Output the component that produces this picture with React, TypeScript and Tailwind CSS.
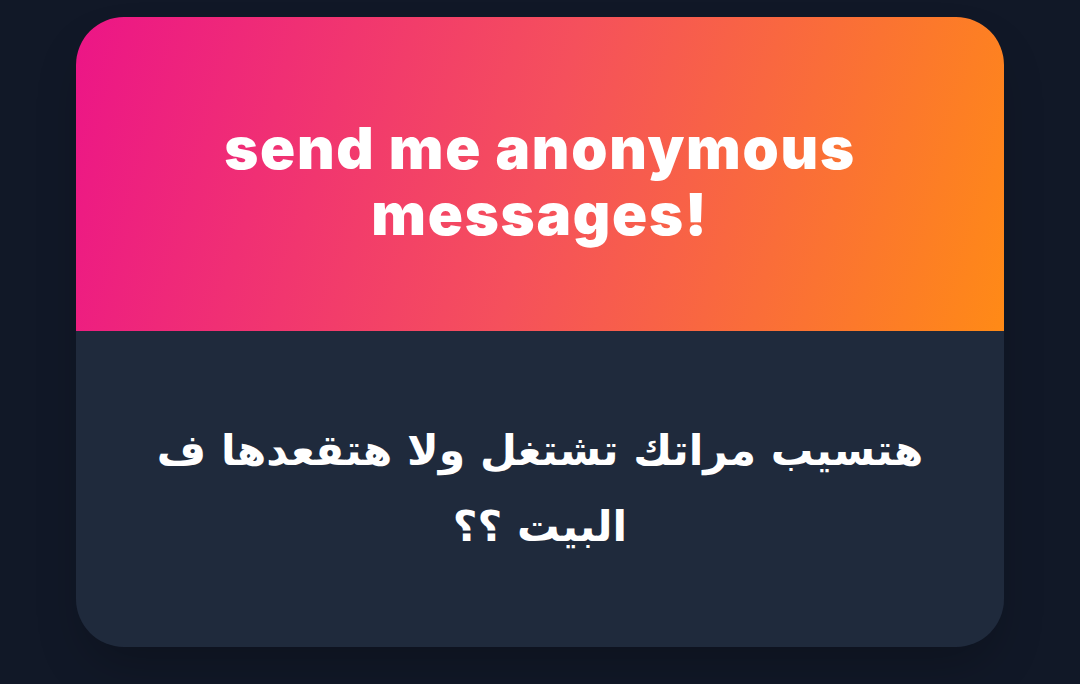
import React from 'react';

export default function App() {
    return (
        <div className="w-[1080px] h-[684px] bg-[#111827] flex items-start justify-center pt-[17px]">
            <div className="w-[928px] h-[630px] rounded-[48px] overflow-hidden flex flex-col shadow-2xl">
                {/* Header */}
                <div className="h-[314px] bg-[linear-gradient(105deg,#ec1587_0%,#f5505c_50%,#ff8a16_100%)] flex items-center justify-center px-10">
                    <h1
                        className="text-white text-center text-[58px] leading-[66px] font-black tracking-[0.03em] pt-[14px]"
                        style={{ fontFamily: 'Inter, "Liberation Sans", sans-serif' }}
                    >
                        send me anonymous
                        <br />
                        messages!
                    </h1>
                </div>

                {/* Body */}
                <div className="flex-1 bg-[#1f2a3c] flex items-center justify-center px-12">
                    <p
                        dir="rtl"
                        className="text-white text-center text-[42.5px] leading-[76px] font-bold"
                        style={{ fontFamily: '"DejaVu Sans", sans-serif' }}
                    >
                        هتسيب مراتك تشتغل ولا هتقعدها ف البيت ؟؟
                    </p>
                </div>
            </div>
        </div>
    );
}
